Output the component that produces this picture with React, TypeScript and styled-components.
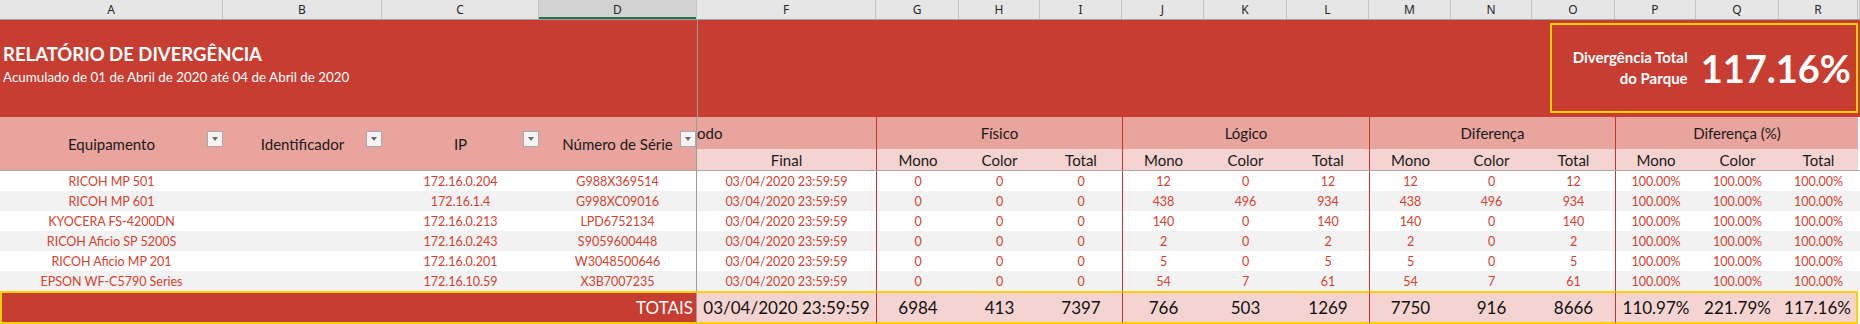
import * as React from 'react'
import styled, { createGlobalStyle } from 'styled-components'

const COLS = '223px 159px 157px 158px 179px 83px 81px 82px 82px 83px 82px 82px 81px 83px 81px 83px 79px 1fr'

const RED = '#c83d31'
const PINK = '#e8a49d'
const LIGHT_PINK = '#f4d3d0'
const TEXT_RED = '#d4412f'
const YELLOW = '#ffd000'
const FREEZE = '#9c9c9c'
const GROUP_LINE = '#c9362a'

const GlobalStyle = createGlobalStyle`
  html, body {
    margin: 0;
    padding: 0;
    background: #ffffff;
  }
  body {
    font-family: Lato, 'Noto Sans', sans-serif;
    width: 1860px;
    height: 324px;
    overflow: hidden;
  }
`

const Sheet = styled.div`
  width: 1860px;
  height: 324px;
  display: flex;
  flex-direction: column;
  overflow: hidden;
`

const LetterBar = styled.div`
  display: grid;
  grid-template-columns: ${COLS};
  height: 19px;
  background: #e6e6e6;
  border-bottom: 1px solid #a3a3a3;
`

const Letter = styled.div<{ $selected?: boolean }>`
  display: flex;
  align-items: center;
  justify-content: center;
  font-family: 'Noto Sans', 'DejaVu Sans', sans-serif;
  font-size: 12px;
  color: #262626;
  border-right: 1px solid #c4c4c4;
  background: ${({ $selected }) => ($selected ? '#d2d2d2' : 'transparent')};
  box-shadow: ${({ $selected }) => ($selected ? 'inset 0 -2px 0 #217346' : 'none')};
`

const Banner = styled.div`
  display: flex;
  height: 97px;
  background: ${RED};
`

const TitleBlock = styled.div`
  width: 694px;
  padding: 23px 0 0 3px;
  border-right: 1px solid ${FREEZE};
  color: #ffffff;
`

const Title = styled.div`
  font-size: 18.5px;
  font-weight: 700;
  line-height: 22px;
`

const Subtitle = styled.div`
  margin-top: 3px;
  font-size: 13.4px;
  line-height: 18px;
`

const BannerRight = styled.div`
  flex: 1;
  display: flex;
  justify-content: flex-end;
  padding: 3px 2px 0 0;
`

const KpiBox = styled.div`
  box-sizing: border-box;
  width: 308px;
  height: 90px;
  border: 2px solid ${YELLOW};
  display: flex;
  align-items: center;
  justify-content: flex-end;
  gap: 13px;
  padding-right: 5px;
  color: #ffffff;
`

const KpiLabel = styled.div`
  font-size: 15px;
  font-weight: 700;
  line-height: 21px;
  text-align: right;
`

const KpiValue = styled.div`
  font-size: 38px;
  font-weight: 700;
  line-height: 40px;
`

const HeaderGrid = styled.div`
  display: grid;
  grid-template-columns: ${COLS};
  grid-template-rows: 32px 21px;
  border-bottom: 1px solid #a6a6a6;
`

const KeyHead = styled.div<{ $freeze?: boolean }>`
  position: relative;
  grid-row: span 2;
  background: ${PINK};
  display: flex;
  align-items: center;
  justify-content: center;
  font-size: 15px;
  color: #1a1a1a;
  white-space: nowrap;
  border-right: ${({ $freeze }) => ($freeze ? `1px solid ${FREEZE}` : 'none')};
`

const FilterButton = styled.div`
  position: absolute;
  right: 0;
  top: 14px;
  box-sizing: border-box;
  width: 16px;
  height: 16px;
  background: #f4f4f4;
  border: 1px solid #a9a9a9;
  display: flex;
  align-items: center;
  justify-content: center;

  &::after {
    content: '';
    border-left: 3.5px solid transparent;
    border-right: 3.5px solid transparent;
    border-top: 4px solid #6b6b6b;
  }
`

const GroupHead = styled.div<{ $span?: number; $sub?: boolean; $start?: boolean; $align?: string }>`
  grid-column: span ${({ $span }) => $span ?? 1};
  background: ${({ $sub }) => ($sub ? LIGHT_PINK : PINK)};
  display: flex;
  align-items: center;
  justify-content: ${({ $align }) => $align ?? 'center'};
  font-size: 15px;
  color: #1a1a1a;
  white-space: nowrap;
  overflow: hidden;
  border-left: ${({ $start }) => ($start ? `1px solid ${GROUP_LINE}` : 'none')};
`

const Filler = styled.div`
  grid-row: span 2;
  background: #ffffff;
`

const Row = styled.div<{ $alt?: boolean }>`
  display: grid;
  grid-template-columns: ${COLS};
  height: 20px;
  background: ${({ $alt }) => ($alt ? '#f2f2f2' : '#ffffff')};
`

const Cell = styled.div<{ $start?: boolean; $freeze?: boolean }>`
  display: flex;
  align-items: center;
  justify-content: center;
  font-size: 12.5px;
  color: ${TEXT_RED};
  white-space: nowrap;
  overflow: hidden;
  border-left: ${({ $start }) => ($start ? `1px solid ${GROUP_LINE}` : 'none')};
  border-right: ${({ $freeze }) => ($freeze ? `1px solid ${FREEZE}` : 'none')};
`

const TotalsRow = styled.div`
  display: grid;
  grid-template-columns: ${COLS};
  height: 33px;
`

const TotalsLabel = styled.div`
  grid-column: span 4;
  background: ${RED};
  border: 2px solid ${YELLOW};
  border-right: 1px solid ${FREEZE};
  display: flex;
  align-items: center;
  justify-content: flex-end;
  padding-right: 3px;
  font-size: 17px;
  color: #ffffff;
`

const TotalCell = styled.div<{ $start?: boolean; $last?: boolean }>`
  background: ${LIGHT_PINK};
  border-top: 2px solid ${YELLOW};
  border-bottom: 2px solid ${YELLOW};
  border-left: ${({ $start }) => ($start ? `1px solid ${GROUP_LINE}` : 'none')};
  border-right: ${({ $last }) => ($last ? `2px solid ${YELLOW}` : 'none')};
  display: flex;
  align-items: center;
  justify-content: center;
  font-size: 17px;
  color: #111111;
  white-space: nowrap;
`

const letters = ['A', 'B', 'C', 'D', 'F', 'G', 'H', 'I', 'J', 'K', 'L', 'M', 'N', 'O', 'P', 'Q', 'R', '']

const rows = [
  ['RICOH MP 501', '', '172.16.0.204', 'G988X369514', '0', '0', '0', '12', '0', '12', '12', '0', '12'],
  ['RICOH MP 601', '', '172.16.1.4', 'G998XC09016', '0', '0', '0', '438', '496', '934', '438', '496', '934'],
  ['KYOCERA FS-4200DN', '', '172.16.0.213', 'LPD6752134', '0', '0', '0', '140', '0', '140', '140', '0', '140'],
  ['RICOH Aficio SP 5200S', '', '172.16.0.243', 'S9059600448', '0', '0', '0', '2', '0', '2', '2', '0', '2'],
  ['RICOH Aficio MP 201', '', '172.16.0.201', 'W3048500646', '0', '0', '0', '5', '0', '5', '5', '0', '5'],
  ['EPSON WF-C5790 Series', '', '172.16.10.59', 'X3B7007235', '0', '0', '0', '54', '7', '61', '54', '7', '61'],
]

const totals = ['6984', '413', '7397', '766', '503', '1269', '7750', '916', '8666', '110.97%', '221.79%', '117.16%']

const groups = ['Físico', 'Lógico', 'Diferença', 'Diferença (%)']
const subs = ['Mono', 'Color', 'Total']
const DATE = '03/04/2020 23:59:59'

const App = () => (
  <Sheet>
    <GlobalStyle />
    <LetterBar>
      {letters.map((l, i) => (
        <Letter key={i} $selected={l === 'D'}>
          {l}
        </Letter>
      ))}
    </LetterBar>

    <Banner>
      <TitleBlock>
        <Title>RELATÓRIO DE DIVERGÊNCIA</Title>
        <Subtitle>Acumulado de 01 de Abril de 2020 até 04 de Abril de 2020</Subtitle>
      </TitleBlock>
      <BannerRight>
        <KpiBox>
          <KpiLabel>
            Divergência Total
            <br />
            do Parque
          </KpiLabel>
          <KpiValue>117.16%</KpiValue>
        </KpiBox>
      </BannerRight>
    </Banner>

    <HeaderGrid>
      <KeyHead>
        Equipamento
        <FilterButton />
      </KeyHead>
      <KeyHead>
        Identificador
        <FilterButton />
      </KeyHead>
      <KeyHead>
        IP
        <FilterButton />
      </KeyHead>
      <KeyHead $freeze>
        Número de Série
        <FilterButton />
      </KeyHead>
      <GroupHead $align="flex-start">odo</GroupHead>
      {groups.map(g => (
        <GroupHead key={g} $span={3} $start>
          {g}
        </GroupHead>
      ))}
      <Filler />
      <GroupHead $sub>Final</GroupHead>
      {groups.map(g =>
        subs.map((s, i) => (
          <GroupHead key={g + s} $sub $start={i === 0}>
            {s}
          </GroupHead>
        ))
      )}
    </HeaderGrid>

    {rows.map((r, ri) => (
      <Row key={ri} $alt={ri % 2 === 1}>
        <Cell>{r[0]}</Cell>
        <Cell>{r[1]}</Cell>
        <Cell>{r[2]}</Cell>
        <Cell $freeze>{r[3]}</Cell>
        <Cell>{DATE}</Cell>
        {r.slice(4).map((v, i) => (
          <Cell key={i} $start={i % 3 === 0}>
            {v}
          </Cell>
        ))}
        {['100.00%', '100.00%', '100.00%'].map((v, i) => (
          <Cell key={'p' + i} $start={i === 0}>
            {v}
          </Cell>
        ))}
        <Cell />
      </Row>
    ))}

    <TotalsRow>
      <TotalsLabel>TOTAIS</TotalsLabel>
      <TotalCell>{DATE}</TotalCell>
      {totals.map((v, i) => (
        <TotalCell key={i} $start={i % 3 === 0} $last={i === totals.length - 1}>
          {v}
        </TotalCell>
      ))}
      <div />
    </TotalsRow>
  </Sheet>
)

export default App
